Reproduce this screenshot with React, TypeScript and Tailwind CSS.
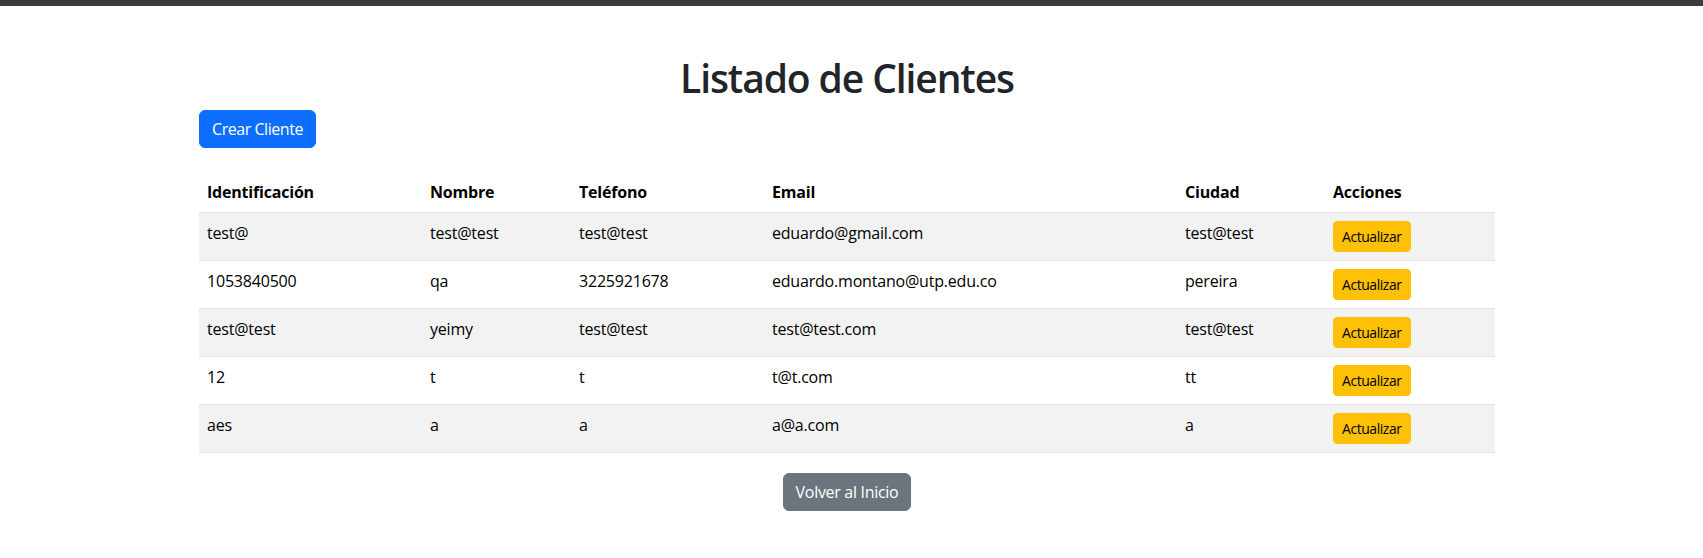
type Cliente = {
  id: string;
  nombre: string;
  telefono: string;
  email: string;
  ciudad: string;
};

const clientes: Cliente[] = [
  { id: "test@", nombre: "test@test", telefono: "test@test", email: "eduardo@gmail.com", ciudad: "test@test" },
  { id: "1053840500", nombre: "qa", telefono: "3225921678", email: "eduardo.montano@utp.edu.co", ciudad: "pereira" },
  { id: "test@test", nombre: "yeimy", telefono: "test@test", email: "test@test.com", ciudad: "test@test" },
  { id: "12", nombre: "t", telefono: "t", email: "t@t.com", ciudad: "tt" },
  { id: "aes", nombre: "a", telefono: "a", email: "a@a.com", ciudad: "a" },
];

const headers = [
  { label: "Identificación", width: "w-[223px]" },
  { label: "Nombre", width: "w-[149px]" },
  { label: "Teléfono", width: "w-[193px]" },
  { label: "Email", width: "w-[413px]" },
  { label: "Ciudad", width: "w-[148px]" },
  { label: "Acciones", width: "w-[170px]" },
];

export default function App() {
  return (
    <div className="min-h-screen bg-white font-['Open_Sans',sans-serif] text-[#212529]">
      <div className="h-[6px] bg-[#3c3c3c]" />
      <div className="flex justify-center pr-[9px]">
        <div className="w-[1296px]">
          <h1 className="mt-[48px] mb-2 text-center text-[39px] leading-[48px] font-semibold tracking-[-1.1px]">
            Listado de Clientes
          </h1>
          <button
            type="button"
            className="rounded-[6px] border border-[#0d6efd] bg-[#0d6efd] px-3 py-1.5 text-base leading-6 tracking-[-0.45px] text-white"
          >
            Crear Cliente
          </button>

          <table className="mt-[24px] w-full border-collapse text-left text-black">
            <thead>
              <tr>
                {headers.map((h) => (
                  <th
                    key={h.label}
                    className={`${h.width} border-b border-[#dee2e6] p-2 align-top text-base leading-6 font-bold tracking-[-0.2px]`}
                  >
                    {h.label}
                  </th>
                ))}
              </tr>
            </thead>
            <tbody className="tracking-[-0.2px]">
              {clientes.map((c, i) => (
                <tr key={c.id + i} className={i % 2 === 0 ? "bg-[#f2f2f2]" : "bg-white"}>
                  <td className="border-b border-[#dee2e6] p-2 align-top text-base leading-6">{c.id}</td>
                  <td className="border-b border-[#dee2e6] p-2 align-top text-base leading-6">{c.nombre}</td>
                  <td className="border-b border-[#dee2e6] p-2 align-top text-base leading-6">{c.telefono}</td>
                  <td className="border-b border-[#dee2e6] p-2 align-top text-base leading-6">{c.email}</td>
                  <td className="border-b border-[#dee2e6] p-2 align-top text-base leading-6">{c.ciudad}</td>
                  <td className="border-b border-[#dee2e6] p-2 align-top">
                    <button
                      type="button"
                      className="rounded-[4px] border border-[#ffc107] bg-[#ffc107] px-2 py-1 text-sm leading-[21px] tracking-[-0.45px] text-black"
                    >
                      Actualizar
                    </button>
                  </td>
                </tr>
              ))}
            </tbody>
          </table>

          <div className="mt-[20px] flex justify-center">
            <button
              type="button"
              className="rounded-[6px] border border-[#6c757d] bg-[#6c757d] px-3 py-1.5 text-base leading-6 tracking-[-0.3px] text-white"
            >
              Volver al Inicio
            </button>
          </div>
        </div>
      </div>
    </div>
  );
}
